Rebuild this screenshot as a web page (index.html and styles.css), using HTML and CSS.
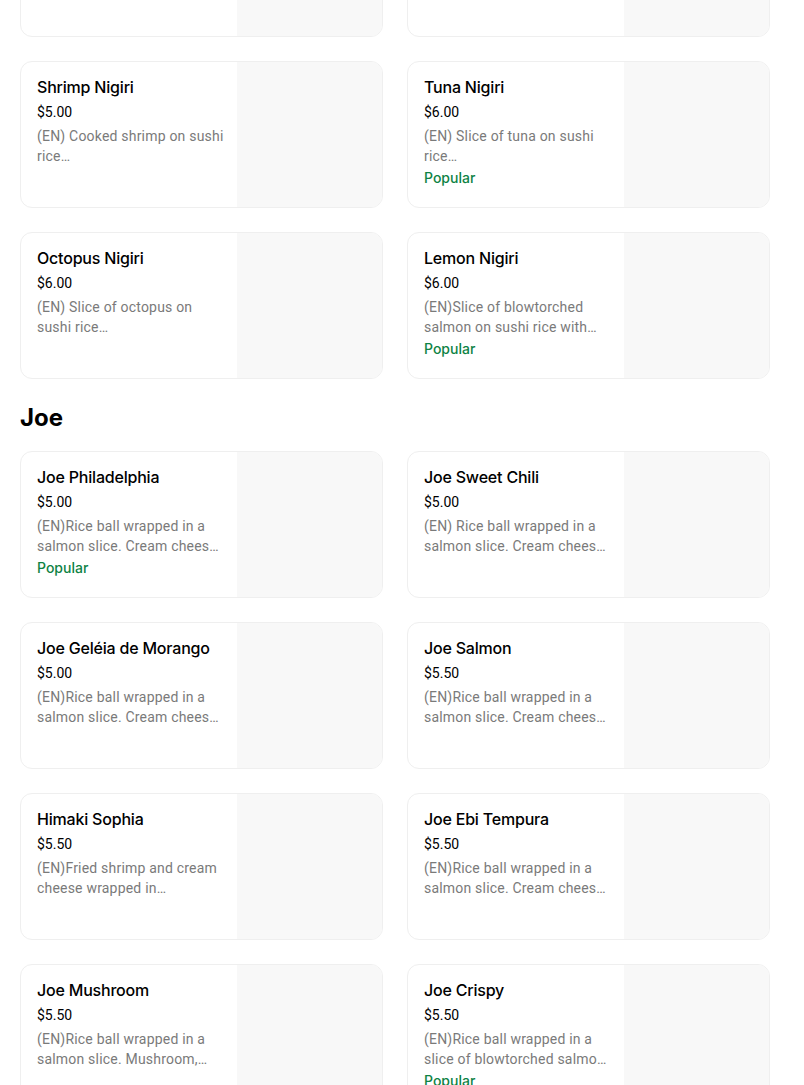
FILE: index.html
```html
<!DOCTYPE html>
<html lang="en">
<head>
<meta charset="utf-8">
<title>Menu</title>
<link rel="stylesheet" href="styles.css">
</head>
<body>
<main class="page">
  <div class="grid grid-first">
    <div class="card"><div class="info"></div><div class="thumb"></div></div>
    <div class="card"><div class="info"></div><div class="thumb"></div></div>
    <div class="card">
      <div class="info">
        <div class="title">Shrimp Nigiri</div>
        <div class="price">$5.00</div>
        <div class="desc"><span>(EN) Cooked shrimp on sushi</span><span>rice…</span></div>
      </div>
      <div class="thumb"></div>
    </div>
    <div class="card">
      <div class="info">
        <div class="title">Tuna Nigiri</div>
        <div class="price">$6.00</div>
        <div class="desc"><span>(EN) Slice of tuna on sushi</span><span>rice…</span></div>
        <div class="tag">Popular</div>
      </div>
      <div class="thumb"></div>
    </div>
    <div class="card">
      <div class="info">
        <div class="title">Octopus Nigiri</div>
        <div class="price">$6.00</div>
        <div class="desc"><span>(EN) Slice of octopus on</span><span>sushi rice…</span></div>
      </div>
      <div class="thumb"></div>
    </div>
    <div class="card">
      <div class="info">
        <div class="title">Lemon Nigiri</div>
        <div class="price">$6.00</div>
        <div class="desc"><span>(EN)Slice of blowtorched</span><span>salmon on sushi rice with…</span></div>
        <div class="tag">Popular</div>
      </div>
      <div class="thumb"></div>
    </div>
  </div>

  <h2 class="section-title">Joe</h2>

  <div class="grid">
    <div class="card">
      <div class="info">
        <div class="title">Joe Philadelphia</div>
        <div class="price">$5.00</div>
        <div class="desc"><span>(EN)Rice ball wrapped in a</span><span>salmon slice. Cream chees…</span></div>
        <div class="tag">Popular</div>
      </div>
      <div class="thumb"></div>
    </div>
    <div class="card">
      <div class="info">
        <div class="title">Joe Sweet Chili</div>
        <div class="price">$5.00</div>
        <div class="desc"><span>(EN) Rice ball wrapped in a</span><span>salmon slice. Cream chees…</span></div>
      </div>
      <div class="thumb"></div>
    </div>
    <div class="card">
      <div class="info">
        <div class="title">Joe Geléia de Morango</div>
        <div class="price">$5.00</div>
        <div class="desc"><span>(EN)Rice ball wrapped in a</span><span>salmon slice. Cream chees…</span></div>
      </div>
      <div class="thumb"></div>
    </div>
    <div class="card">
      <div class="info">
        <div class="title">Joe Salmon</div>
        <div class="price">$5.50</div>
        <div class="desc"><span>(EN)Rice ball wrapped in a</span><span>salmon slice. Cream chees…</span></div>
      </div>
      <div class="thumb"></div>
    </div>
    <div class="card">
      <div class="info">
        <div class="title">Himaki Sophia</div>
        <div class="price">$5.50</div>
        <div class="desc"><span>(EN)Fried shrimp and cream</span><span>cheese wrapped in…</span></div>
      </div>
      <div class="thumb"></div>
    </div>
    <div class="card">
      <div class="info">
        <div class="title">Joe Ebi Tempura</div>
        <div class="price">$5.50</div>
        <div class="desc"><span>(EN)Rice ball wrapped in a</span><span>salmon slice. Cream chees…</span></div>
      </div>
      <div class="thumb"></div>
    </div>
    <div class="card">
      <div class="info">
        <div class="title">Joe Mushroom</div>
        <div class="price">$5.50</div>
        <div class="desc"><span>(EN)Rice ball wrapped in a</span><span>salmon slice. Mushroom,…</span></div>
      </div>
      <div class="thumb"></div>
    </div>
    <div class="card">
      <div class="info">
        <div class="title">Joe Crispy</div>
        <div class="price">$5.50</div>
        <div class="desc"><span>(EN)Rice ball wrapped in a</span><span>slice of blowtorched salmo…</span></div>
        <div class="tag">Popular</div>
      </div>
      <div class="thumb"></div>
    </div>
  </div>
</main>
</body>
</html>
```

FILE: styles.css
```css
* { box-sizing: border-box; }

html, body {
  margin: 0;
  padding: 0;
  background: #ffffff;
  overflow: hidden;
}

body {
  font-family: "Inter", "Roboto", "Liberation Sans", sans-serif;
  color: #000000;
  height: 1085px;
}

.page {
  width: 770px;
  padding-left: 20px;
  margin-top: -110px;
}

.grid {
  display: grid;
  grid-template-columns: 1fr 1fr;
  column-gap: 24px;
  row-gap: 24px;
}

.card {
  display: flex;
  height: 147px;
  border: 1px solid #efefef;
  border-radius: 12px;
  overflow: hidden;
  background: #ffffff;
}

.info {
  width: 216px;
  flex: none;
  padding: 15px 16px 0 16px;
  display: flex;
  flex-direction: column;
}

.thumb {
  flex: 1;
  background: #f8f8f8;
}

.title {
  font-size: 16px;
  line-height: 20px;
  font-weight: 500;
  letter-spacing: -0.2px;
  color: #000;
  white-space: nowrap;
}

.price {
  margin-top: 5px;
  font-family: "Roboto", "Inter", sans-serif;
  font-size: 14px;
  line-height: 20px;
  color: #000;
}

.desc {
  margin-top: 4px;
  font-family: "Roboto", "Inter", sans-serif;
  font-size: 14px;
  line-height: 20px;
  letter-spacing: 0.2px;
  color: #7a7a7a;
  display: flex;
  flex-direction: column;
}

.desc span {
  white-space: nowrap;
}

.tag {
  margin-top: 2px;
  font-size: 14px;
  line-height: 20px;
  font-weight: 500;
  color: #0e8345;
}

.section-title {
  margin: 21px 0 15px 0;
  font-size: 24px;
  line-height: 36px;
  font-weight: 700;
  color: #000;
}
```
